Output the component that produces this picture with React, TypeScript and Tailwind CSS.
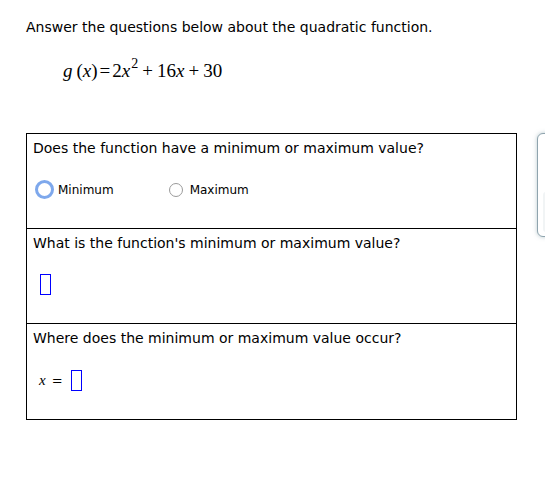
import React from "react";

const sans = { fontFamily: '"DejaVu Sans", Verdana, sans-serif' };
const serif = { fontFamily: '"Liberation Serif", "Times New Roman", serif' };

export default function App() {
  return (
    <div className="relative w-[545px] h-[482px] bg-white overflow-hidden text-black" style={sans}>
      <div className="pl-[26px] pt-[18px] text-[14px] leading-[18px]">
        Answer the questions below about the quadratic function.
      </div>
      <div className="pl-[63px] pt-[24px] text-[19px] leading-[22px] flex items-baseline" style={serif}>
        <span className="italic">g</span>
        <span className="ml-[4px]">(</span>
        <span className="italic">x</span>
        <span>)</span>
        <span className="mx-[2px]">=</span>
        <span>2</span>
        <span className="italic">x</span>
        <span className="relative -top-[9px] text-[14px] ml-[1px]">2</span>
        <span className="mx-[4px]">+</span>
        <span>16</span>
        <span className="italic">x</span>
        <span className="mx-[4px]">+</span>
        <span>30</span>
      </div>

      <div className="ml-[26px] mt-[49px] w-[491px] border border-black">
        <div className="h-[95px] border-b border-black px-[6px] pt-[5px]">
          <div className="text-[14px] leading-[18px]">Does the function have a minimum or maximum value?</div>
          <div className="flex items-center mt-[23px] text-[12px]">
            <div className="ml-[2px] w-[19px] h-[19px] rounded-full border-[3px] border-[#7ea8ec] bg-white" />
            <span className="ml-[4px]">Minimum</span>
            <div className="ml-[55px] w-[14px] h-[14px] rounded-full border border-[#9a9a9a] bg-white" />
            <span className="ml-[7px]">Maximum</span>
          </div>
        </div>
        <div className="h-[95px] border-b border-black px-[6px] pt-[5px]">
          <div className="text-[14px] leading-[18px]">What is the function's minimum or maximum value?</div>
          <div className="ml-[7px] mt-[22px] w-[11px] h-[21px] border border-[#0000ff]" />
        </div>
        <div className="h-[95px] px-[6px] pt-[5px]">
          <div className="text-[14px] leading-[18px]">Where does the minimum or maximum value occur?</div>
          <div className="flex items-center mt-[22px] ml-[6px]">
            <span className="italic text-[15px]" style={serif}>x</span>
            <span className="ml-[6px] text-[13px]">=</span>
            <div className="ml-[8px] w-[11px] h-[21px] border border-[#0000ff]" />
          </div>
        </div>
      </div>

      <div className="absolute left-[537px] top-[133px] w-[40px] h-[104px] rounded-[6px] border border-[#8fa4ae] bg-white shadow-[0_0_4px_rgba(120,150,160,0.5)]">
        <div className="absolute left-[5px] top-[58px] w-[30px] h-[40px] rounded-[3px] bg-[#f1f4f5]" />
      </div>
    </div>
  );
}
